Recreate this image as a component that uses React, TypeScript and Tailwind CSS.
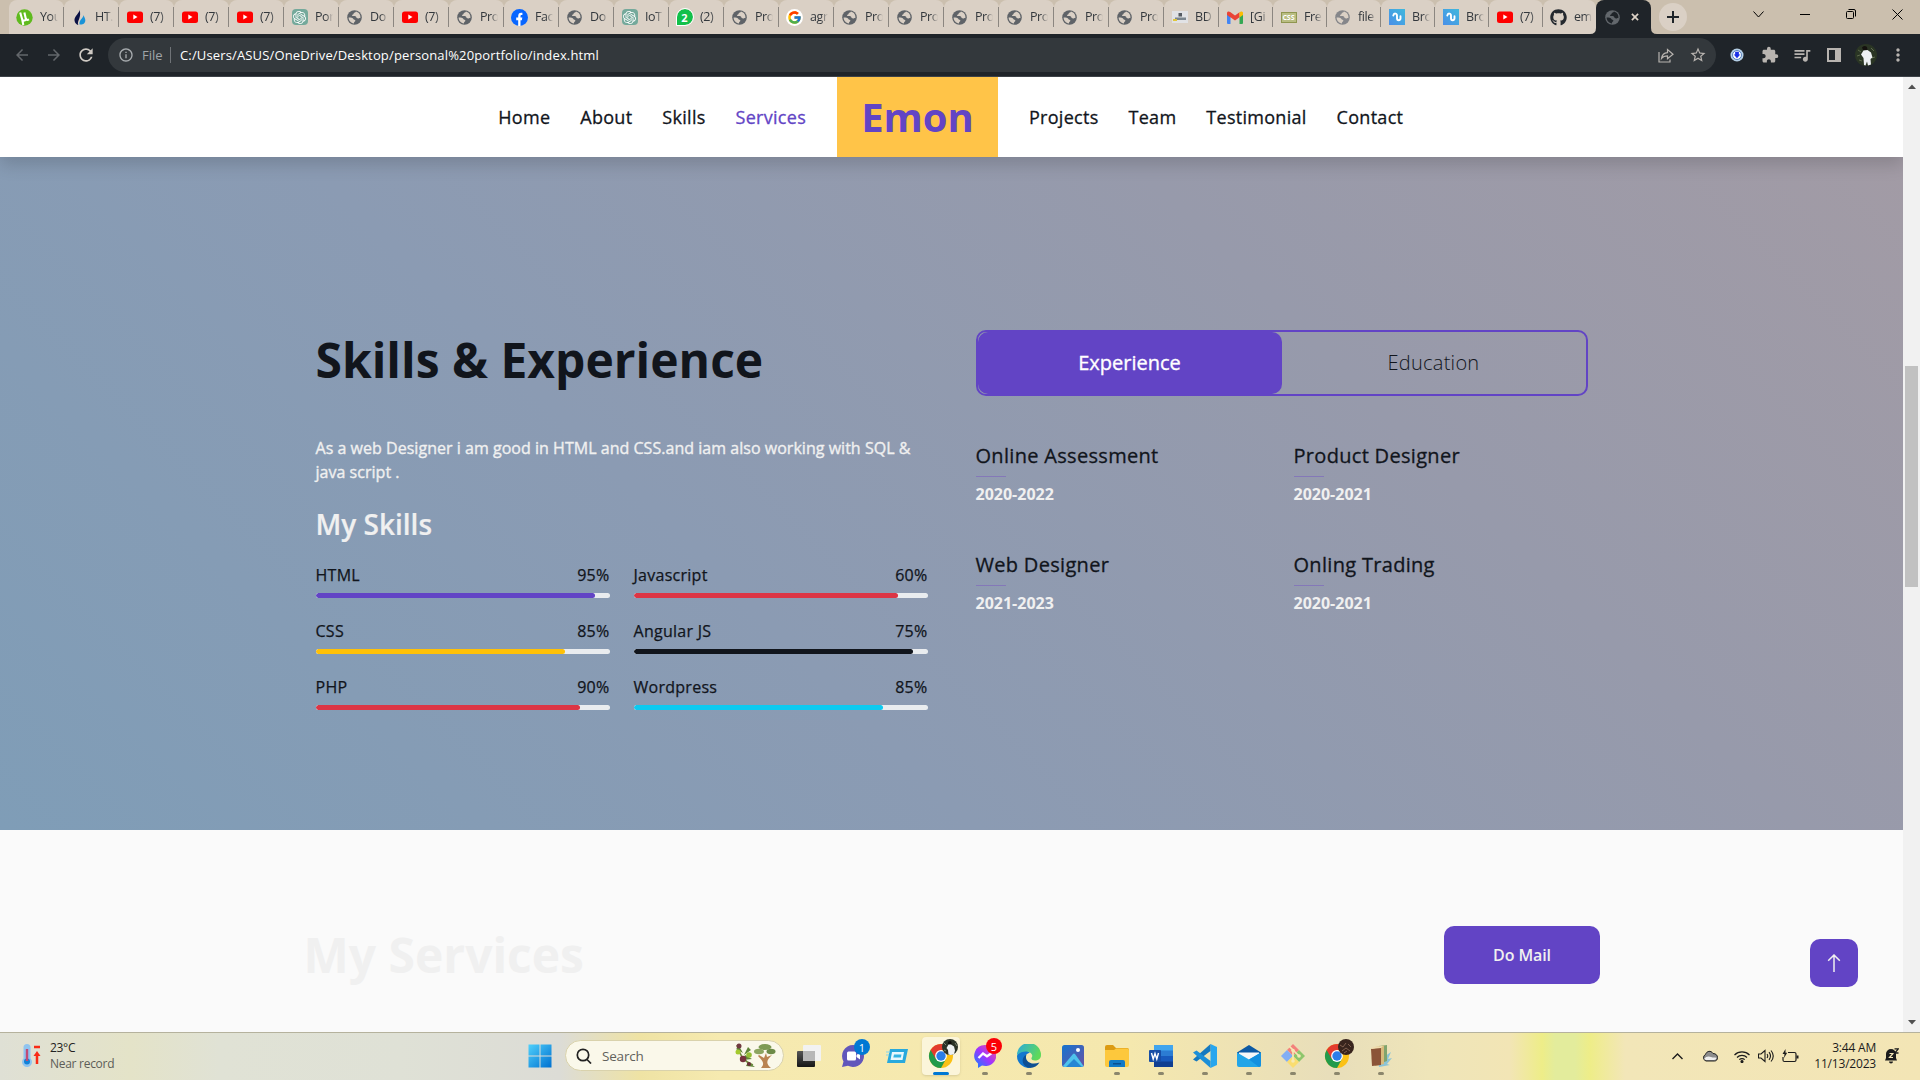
import React from "react";
import { MdExtension, MdQueueMusic, MdInfoOutline, MdStarOutline, MdArrowBack, MdArrowForward, MdRefresh, MdMoreVert } from "react-icons/md";
import { FaGithub } from "react-icons/fa";
import { FcGoogle } from "react-icons/fc";
import { SiOpenai } from "react-icons/si";

const Youtube = () => (
  <svg width="16" height="16" viewBox="0 0 16 16">
    <rect x="0" y="2.500" width="16" height="11.500" rx="2.500" fill="#f00" />
    <path d="M6.300 5.500v5L10.500 8z" fill="#fff" />
  </svg>
);
const GlobeShape = ({ color, cut }: { color: string; cut: string }) => (
  <svg width="15" height="15" viewBox="0 0 15 15">
    <circle cx="7.500" cy="7.500" r="7.300" fill={color} />
    <path d="M9 1.600c-.6 1.200-2 1-2.400 2 .2 1.200-1.800.9-1.500 2.300 1.200.3 3.400-.5 4 .8.300 1.500 1.700 2 3 1.500.7-.3 1-.2 1.300 0C13.800 5 12 2.400 9 1.600z" fill={cut} />
    <path d="M1.600 7.500c1.500-.1 4.300.3 4.800 1.600.2 1 1.900.6 2 1.700-.1 1.100-1.400.8-1.500 2.600C4 13.200 1.700 10.800 1.600 7.500z" fill={cut} />
  </svg>
);
const Globe = () => <GlobeShape color="#5f6368" cut="#dad0c5" />;
const GlobeLight = () => <GlobeShape color="#85868a" cut="#dad0c5" />;
const OpenAi = () => (
  <span className="flex h-4 w-4 items-center justify-center rounded-sm bg-[#74a99b]">
    <SiOpenai size={13} color="#fff" />
  </span>
);
const Wave = () => (
  <svg width="16" height="16" viewBox="0 0 16 16">
    <defs><linearGradient id="wv" x1="0" y1="1" x2="1" y2="0"><stop offset="0" stopColor="#4a8fe8" /><stop offset="1" stopColor="#3fb8dc" /></linearGradient></defs>
    <rect width="16" height="16" fill="url(#wv)" />
    <path d="M4.300 6.500c.6-2.800 3.700-2.400 3.700.3v2.500c0 2.600 3.200 2.600 3.500 0V7.300" fill="none" stroke="#fff" strokeWidth="1.900" strokeLinecap="round" />
  </svg>
);
const Torrent = () => (
  <svg width="17" height="17" viewBox="0 0 17 17">
    <circle cx="8.500" cy="8.500" r="8.200" fill="#5fba1e" />
    <path d="M4.200 3.500l2 7c.6 1.800 4 1.300 3.600-.8L8.400 3.600M9.800 9.500c.5 1.800 2 1.500 3.200.8M6 9.500l1.300 6.500" fill="none" stroke="#fff" strokeWidth="2.100" />
  </svg>
);
const Flame = () => (
  <svg width="14" height="17" viewBox="0 0 14 17">
    <path d="M6.500.5C7 4 1 7 1.500 11.500c.3 2.500 2 4 3.800 4.500C3.500 12 9 9 6.500.5z" fill="#0b1145" />
    <path d="M10.500 6c.2 3-4.500 4.500-4 9.500 3 .6 6-1 5.800-4.500C12.200 9 11 8 10.500 6z" fill="#1a93d8" />
  </svg>
);
const Facebook = () => (
  <svg width="17" height="17" viewBox="0 0 17 17">
    <circle cx="8.500" cy="8.500" r="8.500" fill="#0866ff" />
    <path d="M7.200 17v-5.800H5.200V8.600h2V7.100c0-2.700 1.300-3.700 4.200-3.300v2.200c-1.500-.1-1.900.1-1.900 1.200v1.400h1.800l-.4 2.600H9.500V17z" fill="#fff" />
  </svg>
);
const Whatsapp = () => (
  <span className="flex h-4 w-4 items-center justify-center rounded-full rounded-bl-none bg-[#12c04a] text-[11px] font-bold leading-none text-white outline outline-1 outline-white">2</span>
);
const Picture = () => (
  <svg width="16" height="12" viewBox="0 0 16 12">
    <rect width="16" height="12" fill="#e1e2e5" />
    <rect x="6.500" y="2" width="3.500" height="3.500" fill="#555b62" />
    <rect x="3" y="6.500" width="11" height="2.500" fill="#7b858e" />
    <rect x="1" y="8" width="4" height="2" fill="#e0c63a" />
  </svg>
);
const Gmail = () => (
  <svg width="16" height="13" viewBox="0 0 16 13">
    <path d="M0 2v10q0 1 1 1h2.500V5z" fill="#4285f4" />
    <path d="M16 2v10q0 1-1 1h-2.500V5z" fill="#34a853" />
    <path d="M0 4V2C0 .2 2 0 3.200 1L8 4.600 12.500 1.300v5L8 9.600 3.500 6.200V6.600z" fill="#ea4335" />
    <path d="M12.500 1.200C14 0 16 .3 16 2v2l-3.500 2.600z" fill="#fbbc04" />
  </svg>
);
const Css = () => (
  <span className="flex h-[11px] w-4 items-center justify-center border border-[#8f9650] bg-[#b9bd83] text-[7px] font-bold leading-none text-white">CSS</span>
);
const GoogleG = () => (
  <span className="flex h-[17px] w-[17px] items-center justify-center rounded-full bg-white"><FcGoogle size={15} /></span>
);
const Hub = () => <FaGithub size={17} color="#24292f" />;

const tabs: [React.FC, string][] = [
  [Torrent, "You"], [Flame, "HT."], [Youtube, "(7)"], [Youtube, "(7)"], [Youtube, "(7)"], [OpenAi, "Por"],
  [Globe, "Do"], [Youtube, "(7)"], [Globe, "Pro"], [Facebook, "Fac"], [Globe, "Do"], [OpenAi, "IoT"],
  [Whatsapp, "(2)"], [Globe, "Pro"], [GoogleG, "agr"], [Globe, "Pro"], [Globe, "Pro"], [Globe, "Pro"],
  [Globe, "Pro"], [Globe, "Pro"], [Globe, "Pro"], [Picture, "BD"], [Gmail, "[Gi"], [Css, "Fre"],
  [GlobeLight, "file"], [Wave, "Bro"], [Wave, "Bro"], [Youtube, "(7)"], [Hub, "em"],
];

const Portrait = ({ size }: { size: number }) => (
  <svg width={size} height={size} viewBox="0 0 22 22">
    <circle cx="11" cy="11" r="11" fill="#2a3524" />
    <path d="M3 6l3 2M2 12l3-1M16 4l3 3M17 14l3-1M4 16l3 1" stroke="#5d6a4d" />
    <path d="M7 3.500q2.500-2.500 5-.5l.5 3H8z" fill="#14110e" />
    <path d="M9 21l-.5-7L6 10.500 8.500 6.500l4-.5 3.500 2.500 1.500 5-2 1.500.5 5.500-3 1-1-4-1.500 4z" fill="#edf0f3" />
  </svg>
);

function TabStrip() {
  return (
    <div className="flex h-[34px] bg-[#cbbfae] pl-[9px] text-[12.500px] text-[#33383d]">
      {tabs.map(([Icon, label], i) => (
        <div
          key={i}
          className={`relative flex h-[34px] shrink-0 items-center rounded-t-lg bg-[#dad0c5] ${i < 22 ? "w-[55px]" : i < 28 ? "w-[54px]" : "w-[53px]"}`}
        >
          <span className="ml-[7px] flex w-[17px] shrink-0 items-center justify-center"><Icon /></span>
          <span className="ml-[7px] w-[18px] whitespace-nowrap tracking-[-0.400px] [mask-image:linear-gradient(90deg,#000_60%,transparent)]">{label}</span>
          {i < tabs.length - 1 && <span className="absolute right-0 top-[7px] h-5 w-px bg-[#8b8680]" />}
        </div>
      ))}
      <div className="relative z-10 flex h-[34px] w-[55px] shrink-0 items-center rounded-t-lg bg-[#1f2429]">
        <svg className="absolute -left-1.5 bottom-0" width="6" height="6" viewBox="0 0 6 6"><path d="M6 0v6H0q6 0 6-6z" fill="#1f2429" /></svg>
        <svg className="absolute -right-1.5 bottom-0" width="6" height="6" viewBox="0 0 6 6"><path d="M0 0v6h6Q0 6 0 0z" fill="#1f2429" /></svg>
        <span className="ml-[9px]"><GlobeShape color="#62676c" cut="#1f2429" /></span>
        <svg className="ml-[11px]" width="8" height="8" viewBox="0 0 9 9" stroke="#ddd2c6" strokeWidth="1.900"><path d="M1 1l7 7M8 1L1 8" /></svg>
      </div>
      <div className="ml-2 mt-[3px] flex h-7 w-7 items-center justify-center rounded-full bg-[#dad0c5]">
        <svg width="12" height="12" viewBox="0 0 12 12" stroke="#1f2429" strokeWidth="2"><path d="M6 0v12M0 6h12" /></svg>
      </div>
      <div className="ml-auto flex h-7 items-center text-black">
        <svg className="mr-[36px]" width="11" height="9" viewBox="0 0 11 9" fill="none" stroke="currentColor"><path d="M.5 1.500l5 5.500 5-5.500" /></svg>
        <svg className="mr-[36px]" width="10" height="10" viewBox="0 0 10 10" stroke="currentColor"><path d="M0 5.500h10" /></svg>
        <svg className="mr-[36px]" width="10" height="10" viewBox="0 0 10 10" fill="none" stroke="currentColor"><rect x=".5" y="2.500" width="7" height="7" rx="1" /><path d="M2.500.5H8q1.500 0 1.500 1.500v5.500" /></svg>
        <svg className="mr-[17px]" width="11" height="11" viewBox="0 0 11 11" stroke="currentColor"><path d="M.5.5l10 10M10.500.5l-10 10" /></svg>
      </div>
    </div>
  );
}

function Toolbar() {
  return (
    <div className="flex h-[43px] items-center border-b border-[#3d4248] bg-[#1f2429] text-[#b8b4b0]">
      <MdArrowBack className="ml-[13px]" size={18} color="#63676b" />
      <MdArrowForward className="ml-[14px]" size={18} color="#63676b" />
      <MdRefresh className="ml-[13px]" size={20} color="#cfcac4" />
      <div className="ml-[12px] flex h-[34px] w-[1608px] items-center rounded-full bg-[#33383c]">
        <MdInfoOutline className="ml-[10px]" size={16} color="#a8acaf" />
        <span className="ml-[8px] w-[21px] pt-px text-[13px] text-[#a0a5a9]">File</span>
        <span className="ml-[7px] h-4 w-px bg-[#6f7377]" />
        <span className="ml-[9px] whitespace-nowrap pt-px text-[13px] tracking-[0.150px] text-white">C:/Users/ASUS/OneDrive/Desktop/personal%20portfolio/index.html</span>
        <svg className="ml-auto mr-[15px]" width="16" height="16" viewBox="0 0 16 16" fill="none" stroke="currentColor" strokeWidth="1.200">
          <path d="M1 5v10h11v-2.500M3.500 11.500C4 7.500 6 5.800 9.500 5.600V2.500L15 7.300l-5.500 4.500V8.900C6.500 8.900 5 9.600 3.500 11.500z" />
        </svg>
        <MdStarOutline className="mr-[9px]" size={18} />
      </div>
      <svg className="ml-[14px]" width="14" height="14" viewBox="0 0 15 15">
        <circle cx="7.500" cy="7.500" r="7" fill="#b5cfe6" />
        <circle cx="7.500" cy="7.500" r="4.800" fill="#fff" stroke="#4d78b8" />
        <path d="M5.500 4h4v3H11l-3.500 4L4 7h1.500z" fill="#1b30e8" />
      </svg>
      <MdExtension className="ml-[17px]" size={18} />
      <MdQueueMusic className="ml-[13px]" size={20} />
      <svg className="ml-[15px]" width="14" height="14" viewBox="0 0 14 14"><path d="M0 0h14v14H0zM2 2v10h6V2z" fill="currentColor" fillRule="evenodd" /></svg>
      <span className="ml-[14px]"><Portrait size={22} /></span>
      <MdMoreVert className="ml-[11px]" size={20} />
    </div>
  );
}

function Navbar() {
  return (
    <nav className="relative z-10 flex h-20 shrink-0 items-center bg-white text-[18px] tracking-[0.280px] text-[#11151c] shadow-[0_8px_16px_rgba(0,0,0,0.15)] [-webkit-text-stroke:0.300px]">
      <div className="flex w-[837px] justify-end gap-[30px] pr-[31px]">
        <span>Home</span>
        <span>About</span>
        <span>Skills</span>
        <span className="text-[#6244c5]">Services</span>
      </div>
      <div className="flex h-20 w-[161px] items-center justify-center bg-[#ffc448] text-[40px] font-bold tracking-normal text-[#6244c5] [-webkit-text-stroke:0px]">Emon</div>
      <div className="flex gap-[30px] pl-[31px]">
        <span>Projects</span>
        <span>Team</span>
        <span>Testimonial</span>
        <span>Contact</span>
      </div>
    </nav>
  );
}

const skills = [
  { name: "HTML", label: "95%", width: 95, color: "bg-[#6244c5]" },
  { name: "Javascript", label: "60%", width: 90, color: "bg-[#dc3545]" },
  { name: "CSS", label: "85%", width: 85, color: "bg-[#ffc107]" },
  { name: "Angular JS", label: "75%", width: 95, color: "bg-[#11151c]" },
  { name: "PHP", label: "90%", width: 90, color: "bg-[#dc3545]" },
  { name: "Wordpress", label: "85%", width: 85, color: "bg-[#0dcaf0]" },
];
const jobs = [
  ["Online Assessment", "2020-2022"],
  ["Product Designer", "2020-2021"],
  ["Web Designer", "2021-2023"],
  ["Onling Trading", "2020-2021"],
];

function SkillsSection() {
  return (
    <section className="flex h-[673px] shrink-0 gap-12 bg-[linear-gradient(45deg,#7f9db7_0%,#8b9bb3_38%,#979aab_70%,#a29ba5_100%)] pl-[315.500px] text-[#11151c]">
      <div className="w-[612px] pt-[174px]">
        <h1 className="text-[48px] font-bold leading-[58px]">Skills &amp; Experience</h1>
        <p className="mt-[47px] text-[16px] leading-6 tracking-[0.030px] text-[#f0f0f0] [-webkit-text-stroke:0.350px]">
          As a web Designer i am good in HTML and CSS.and iam also working with SQL &amp;<br />java script .
        </p>
        <h3 className="mt-[23px] text-[28px] font-semibold leading-[34px] text-[#f0f0f0] [-webkit-text-stroke:0.200px]">My Skills</h3>
        <div className="mt-[25px] grid grid-cols-2 gap-x-6">
          {skills.map((s) => (
            <div key={s.name} className="h-14">
              <div className="flex justify-between text-[16px] leading-[19px] tracking-[0.270px] [-webkit-text-stroke:0.250px]">
                <span>{s.name}</span>
                <span>{s.label}</span>
              </div>
              <div className="mt-[8px] h-[5px] overflow-hidden rounded-full bg-[#e9ecef]">
                <div className={`h-full rounded-full ${s.color}`} style={{ width: `${s.width}%` }} />
              </div>
            </div>
          ))}
        </div>
      </div>
      <div className="w-[612px] pt-[173px]">
        <div className="flex h-[66px] rounded-[10px] border-2 border-[#6244c5] text-[20px]">
          <div className="flex w-1/2 items-center justify-center rounded-[10px] bg-[#6244c5] text-white [-webkit-text-stroke:0.350px]">Experience</div>
          <div className="flex w-1/2 items-center justify-center font-light tracking-[0.250px]">Education</div>
        </div>
        <div className="mt-[48px] grid grid-cols-2 gap-x-6">
          {jobs.map(([title, years]) => (
            <div key={title} className="h-[109px]">
              <h5 className="text-[20px] leading-6 tracking-[0.310px] [-webkit-text-stroke:0.300px]">{title}</h5>
              <div className="mt-[8px] h-px w-[30px] bg-[#8478b8]" />
              <div className="mt-[5px] text-[16px] font-bold leading-6 text-[#f0f0f0]">{years}</div>
            </div>
          ))}
        </div>
      </div>
    </section>
  );
}

function ServicesSection() {
  return (
    <section className="flex flex-1 items-start bg-[#fafafa] pl-[303.500px]">
      <h1 className="mt-[96px] w-[1140.500px] text-[48px] font-bold leading-[58px] text-[#f0f0f0]">My Services</h1>
      <div className="mt-[96px] flex h-[58px] w-[156px] items-center justify-center rounded-[10px] bg-[#6244c5] text-[16px] font-semibold tracking-[-0.100px] text-[#f0f0f0]">Do Mail</div>
      <div className="ml-[210px] mt-[109px] flex h-12 w-12 items-center justify-center rounded-[10px] bg-[#6244c5]">
        <svg width="14" height="18" viewBox="0 0 14 18" fill="none" stroke="#f0f0f0" strokeWidth="1.500"><path d="M7 18V1M1.200 6.800L7 1l5.800 5.800" /></svg>
      </div>
    </section>
  );
}

function Scrollbar() {
  return (
    <div className="flex w-[17px] flex-col items-center bg-[#f1f1f1]">
      <svg className="mt-[7px]" width="8" height="5" viewBox="0 0 8 5"><path d="M0 5l4-4.500L8 5z" fill="#505050" /></svg>
      <div className="mt-[277px] h-[221px] w-[13px] bg-[#c1c1c1]" />
      <svg className="mb-[7px] mt-auto" width="8" height="5" viewBox="0 0 8 5"><path d="M0 0l4 4.500L8 0z" fill="#505050" /></svg>
    </div>
  );
}

const Chrome = ({ children }: { children: React.ReactNode }) => (
  <svg width="30" height="30" viewBox="0 0 30 30">
    <circle cx="13" cy="17" r="12" fill="#fbc116" />
    <path d="M13 17L2.600 11A12 12 0 0 0 13 29l5-9z" fill="#229a4b" />
    <path d="M13 11h10.400A12 12 0 0 0 2.600 11l5.200 9z" fill="#e33b2e" />
    <circle cx="13" cy="17" r="5.900" fill="#fff" />
    <circle cx="13" cy="17" r="4.700" fill="#2a7de9" />
    {children}
  </svg>
);
const ManAvatar = () => (
  <g>
    <circle cx="22" cy="8" r="8" fill="#2b3227" />
    <path d="M16 4l2 2M27 4l2 3M16 11l2 1" stroke="#788070" />
    <path d="M20 3q2-2 3.500 0v2.500H20z" fill="#0f0d0b" />
    <path d="M20.500 15.500L20 11l-1.500-2 2-3.500h2.500l3 2 1 4-1 3.500q-3 1.500-5.500.5z" fill="#edf0f2" />
  </g>
);
const DarkAvatar = () => (
  <g>
    <circle cx="22" cy="8" r="8" fill="#38241d" />
    <path d="M16 6l3 2 3-4M18 12l4-3 4 3M24 5l3 3M20 14l3-2" stroke="#81604f" fill="none" />
  </g>
);
const Badge = ({ n, color }: { n: string; color: string }) => (
  <span className={`absolute -right-[6px] -top-[6px] flex h-4 w-4 items-center justify-center rounded-full text-[11px] leading-none text-white ${color}`}>{n}</span>
);

const appIcons: { icon: React.ReactNode; open?: boolean; active?: boolean }[] = [
  { icon: <svg width="24" height="22" viewBox="0 0 24 22"><defs><linearGradient id="tv" x1="0" y1="0" x2="0" y2="1"><stop offset="0" stopColor="#555" /><stop offset="1" stopColor="#161616" /></linearGradient></defs><rect y="6" width="18" height="16" rx="1" fill="url(#tv)" /><rect x="6" y="0" width="18" height="16" rx="1" fill="#f2f2f2" /><path d="M6 6h12v10H6z" fill="#b7b7b7" /></svg> },
  { icon: <span className="relative"><svg width="22" height="22" viewBox="0 0 22 22"><path d="M11 0a11 11 0 1 1-5 20.800L0 22l1.500-5.500A11 11 0 0 1 11 0z" fill="#6157bb" /><rect x="5" y="6.500" width="9" height="9" rx="1.500" fill="#fff" /><path d="M14.500 10l3.500-2.500v7L14.500 12z" fill="#fff" /></svg><Badge n="1" color="bg-[#0078d4]" /></span> },
  { icon: <svg width="22" height="14" viewBox="0 0 22 14"><path d="M4 0h18l-3 14H1z" fill="#28a9dd" /><path d="M6 3h12l-1.500 8h-12z" fill="#e8f8fd" /><path d="M8 5.500h7.500l-.6 3H7.300z" fill="#35b5e3" /><path d="M0 3h4M0 6h3" stroke="#80d5ef" /></svg> },
  { icon: <span className="-mt-1 ml-1"><Chrome><ManAvatar /></Chrome></span>, active: true },
  { icon: <span className="relative"><svg width="22" height="24" viewBox="0 0 22 24"><defs><linearGradient id="ms" x1="0" y1="1" x2="1" y2="0"><stop offset="0" stopColor="#0a86ff" /><stop offset=".5" stopColor="#a033ff" /><stop offset="1" stopColor="#ff5b80" /></linearGradient></defs><path d="M11 1a11 10.500 0 1 1-3 20.500L4 24v-4.500A10.500 10.500 0 0 1 11 1z" fill="url(#ms)" /><path d="M4.500 14L9 9.500l4 2.800 4.500-3" stroke="#fff" strokeWidth="2.300" fill="none" /></svg><Badge n="5" color="bg-[#fb0007]" /></span>, open: true },
  { icon: <svg width="24" height="24" viewBox="0 0 24 24"><defs><linearGradient id="ed" x1="0" y1="0" x2="1" y2=".4"><stop offset="0" stopColor="#2aa9e0" /><stop offset="1" stopColor="#5fd95a" /></linearGradient></defs><path d="M0 12C1 7 9 4 13 9c-6 0-7 9 0 15A12 12 0 0 1 0 12z" fill="#1277cf" /><path d="M0 11A12 12 0 0 1 24 11c0 4-3 5.500-6 5.500s-4.500-1.500-3-3.500c2-4-7-9-15-2z" fill="url(#ed)" /><path d="M9.500 10.500c-2.500 6 4 11.500 13 8A12 12 0 0 1 13 24C5 23 3 14 9.500 10.500z" fill="#0d4f93" /></svg>, open: true },
  { icon: <svg width="22" height="22" viewBox="0 0 22 22"><defs><linearGradient id="ph" x1="0" y1="0" x2="1" y2="1"><stop offset="0" stopColor="#1675cf" /><stop offset="1" stopColor="#6752a5" /></linearGradient></defs><rect width="22" height="22" rx="2.500" fill="url(#ph)" /><path d="M1 21L11 9q1-1 2 0l8.500 12q-.5 1-2 1h-17q-1 0-1.500-1z" fill="#4ec3ec" /><path d="M4 22l8-8 8 8z" fill="#2586d4" /><circle cx="16" cy="5" r="2" fill="#fff" /></svg> },
  { icon: <svg width="24" height="22" viewBox="0 0 24 22"><path d="M0 2q0-2 2-2h6l3 3h11q2 0 2 2v4H0z" fill="#dc9b12" /><path d="M0 5h9l2-1.500h11q2 0 2 2V20q0 2-2 2H2q-2 0-2-2z" fill="#fdc83c" /><path d="M4 22v-5q0-2 2-2h12q2 0 2 2v5z" fill="#137ac6" /><path d="M8 18h8v1.500H8z" fill="#0a4f91" /></svg>, open: true },
  { icon: <svg width="24" height="22" viewBox="0 0 24 22"><rect x="5" y="0" width="19" height="22" rx="1.500" fill="#185abd" /><path d="M5 0h19v6H5z" fill="#41a5ee" /><path d="M5 5.500h19V11H5z" fill="#2b7cd3" /><path d="M5 16.500h19V22H5z" fill="#103f91" /><rect y="5" width="12" height="12" rx="1" fill="#174ea6" /><path d="M2.500 8l1.700 6L6 8.500 7.800 14 9.500 8" stroke="#fff" strokeWidth="1.400" fill="none" /></svg>, open: true },
  { icon: <svg width="24" height="24" viewBox="0 0 24 24"><path d="M17.500 0L24 3v18l-6.500 3z" fill="#28a6ee" /><path d="M17.500 0v7L3.500 17.500 0 15.500 17.500 0z" fill="#1579bf" /><path d="M17.500 24v-7L3.500 6.500 0 8.500 17.500 24z" fill="#1c8fd8" /></svg>, open: true },
  { icon: <svg width="24" height="22" viewBox="0 0 24 22"><path d="M0 7.500L12 0l12 7.500V11H0z" fill="#0c59a4" /><path d="M2 7.500h20v6L12 18 2 13.500z" fill="#f5f7f9" /><path d="M0 7.500l12 7 12-7V20q0 2-2 2H2q-2 0-2-2z" fill="#22a5e8" /><path d="M12 14.500L24 7.500V20q0 2-2 2z" fill="#1490df" /></svg>, open: true },
  { icon: <svg width="24" height="24" viewBox="0 0 24 24"><path d="M12 0l6 6-6 6-6-6z" fill="#f3827c" /><path d="M6 6l6 6-6 6-6-6z" fill="#82aef5" /><path d="M18 6l6 6-6 6-6-6z" fill="#8dc66c" /><path d="M12 12l6 6-6 6-6-6z" fill="#fadd70" /><path d="M8 2l4 4v11M12 6l6 6" stroke="#f5e9b5" strokeWidth="1.700" fill="none" /><circle cx="12" cy="6.500" r="1.800" fill="#f5e9b5" /><circle cx="12" cy="17" r="1.800" fill="#f5e9b5" /><circle cx="18" cy="12" r="1.800" fill="#f5e9b5" /></svg>, open: true },
  { icon: <span className="-mt-1 ml-1"><Chrome><DarkAvatar /></Chrome></span>, open: true },
  { icon: <svg width="22" height="24" viewBox="0 0 22 24"><path d="M8 17l13-9-3 7 4-1-5 6 3 1-11 2z" fill="#8cc4d6" /><path d="M9 2l8-1v16l-8 3z" fill="#81a46d" /><path d="M5 3l9-1.500V20l-9 2z" fill="#d8ba7c" /><path d="M1 5l10-2v18l-9 1z" fill="#8b5437" /><path d="M1 5l2-2 10-1-2 2z" fill="#f0dcae" /></svg>, open: true },
];

function Taskbar() {
  return (
    <footer className="flex h-12 shrink-0 border-t border-[#b5b29d] bg-[linear-gradient(90deg,#dfe0d5_0px,#e4e3c8_130px,#e0e2d5_220px,#dfe1d6_400px,#dcdcd6_560px,#efe3a4_640px,#f6eab0_720px,#f5e8ae_1130px,#e8deba_1330px,#efe5b9_1430px,#f2e5b5_1510px,#eeed88_1542px,#e3ec9c_1555px,#e3ec9c_1575px,#eeed88_1590px,#f2e6b8_1625px,#f3e5b5_1920px)] text-[12px] leading-4 text-[#222]">
      <div className="flex w-[528px] items-start pl-[21px]">
        <svg className="mt-[10px]" width="20" height="24" viewBox="0 0 20 24">
          <path d="M2.500 4.500a3.500 3.500 0 0 1 7 0v11a5 5 0 1 1-7 0z" fill="#8fc4ef" />
          <circle cx="6" cy="18.500" r="3" fill="#1182d8" /><path d="M6 6v12" stroke="#c04b76" strokeWidth="2.400" />
          <path d="M13 4h6" stroke="#fa2b16" strokeWidth="2.500" /><path d="M16 21v-9" stroke="#fa2b16" strokeWidth="2.500" /><path d="M12.500 13L16 8l3.500 5z" fill="#fa2b16" />
        </svg>
        <div className="mt-[7px] pl-[9px]">
          <div className="tracking-[-0.300px]">23°C</div>
          <div className="tracking-[-0.280px] text-[#5c5d58]">Near record</div>
        </div>
      </div>
      <svg className="mt-[11px]" width="24" height="24" viewBox="0 0 24 24">
        <defs><linearGradient id="win" x1="0" y1="0" x2="1" y2="1"><stop offset="0" stopColor="#4fd0fb" /><stop offset="1" stopColor="#0070d0" /></linearGradient></defs>
        <path d="M.5.500h11v11H.500zM12.500.500h11v11h-11zM.500 12.500h11v11H.500zM12.500 12.500h11v11h-11z" fill="url(#win)" />
      </svg>
      <div className="ml-[13px] mt-[7px] flex h-[31px] w-[219px] items-center rounded-full border border-[#d9d2ac] bg-[#faf8ea]">
        <svg className="ml-[10px]" width="16" height="16" viewBox="0 0 16 16" fill="none" stroke="#222" strokeWidth="1.700"><circle cx="7" cy="7" r="5.700" /><path d="M11 11.500l4 4" /></svg>
        <span className="ml-[10px] text-[13.500px] tracking-[-0.200px] text-[#62625c]">Search</span>
        <svg className="ml-auto mr-[7px]" width="42" height="26" viewBox="0 0 42 26">
          <path d="M3 2c2 10 8 17 16 20" stroke="#6f8b3d" strokeWidth="1.500" fill="none" />
          <path d="M2 6l7 4-4-7zM9 17l9-1-7-4zM12 23l9 1-7-5zM14 4l-4 8 7-5z" fill="#5f8438" />
          <circle cx="5" cy="3" r="2.500" fill="#713a40" /><circle cx="4" cy="9" r="2.500" fill="#a4c92e" /><circle cx="9" cy="16" r="3.200" fill="#75323d" /><circle cx="15" cy="12" r="2.800" fill="#94bd34" /><circle cx="15" cy="21" r="2" fill="#6b303a" />
          <path d="M27 25c4-4 2-7-3-12l1-1 5 3 2-5 1 4 5-2c-5 5-7 8-1 13z" fill="#b98350" />
          <ellipse cx="31" cy="4" rx="6.500" ry="3" fill="#7d9a55" /><ellipse cx="25" cy="8.500" rx="5" ry="2.700" fill="#8ca560" /><ellipse cx="37" cy="8.500" rx="4.500" ry="2.700" fill="#6c8a48" />
        </svg>
      </div>
      <div className="ml-[3px] flex">
        {appIcons.map((a, i) => (
          <div key={i} className="relative flex h-[46px] w-11 items-center justify-center">
            <div className={`flex h-[38px] w-[38px] items-center justify-center rounded ${a.active ? "bg-[#fbf5da] shadow-sm" : ""}`}>{a.icon}</div>
            {a.active && <span className="absolute bottom-[4px] h-[3px] w-4 rounded-full bg-[#0078d4]" />}
            {a.open && <span className="absolute bottom-[4px] h-[3px] w-[6px] rounded-full bg-[#8b866c]" />}
          </div>
        ))}
      </div>
      <div className="ml-auto flex h-[46px] items-center text-[#1c1c1c]">
        <svg className="mr-[19px]" width="11" height="7" viewBox="0 0 11 7" fill="none" stroke="currentColor" strokeWidth="1.400"><path d="M.5 6l5-5 5 5" /></svg>
        <svg className="mr-[16px]" width="16" height="12" viewBox="0 0 16 12"><path d="M4 11a3.500 3.500 0 0 1-.5-6.500C4.500 1 9 0 11 3.500c3 0 4.500 2 4.500 4 0 2-1 3.500-3 3.500z" fill="#8d8d8d" stroke="#222" /><path d="M2 9c2-3 5-3 7-2s4 0 5.500 1q-.5 2-2.500 2H4z" fill="#efefef" /></svg>
        <svg className="mr-[8px]" width="16" height="13" viewBox="0 0 16 13" fill="none" stroke="currentColor" strokeWidth="1.200"><path d="M.5 5a10.500 10.500 0 0 1 15 0M3 7.500a7 7 0 0 1 10 0M5.300 9.700a3.800 3.800 0 0 1 5.400 0" /><circle cx="8" cy="11.500" r="1" fill="currentColor" /></svg>
        <svg className="mr-[7.500px]" width="16" height="14" viewBox="0 0 16 14" fill="none" stroke="currentColor" strokeWidth="1.100"><path d="M.5 5v4H3l4 3.500v-11L3 5zM9 5q1.500 2 0 4M11 3.200q3 3.800 0 7.600M13 1.500q4.500 5.500 0 11" /></svg>
        <svg className="mr-[15.500px]" width="17" height="14" viewBox="0 0 17 14" fill="none" stroke="currentColor" strokeWidth="1.200"><path d="M6 3.500h6.500q1.500 0 1.500 1.500v6q0 1.500-1.500 1.500h-10Q1 12.500 1 11V8" /><path d="M15.500 6.500v3" strokeWidth="2" /><path d="M3.500 0L.5 5h2L2 9l3.200-5.200H3.500z" fill="currentColor" stroke="none" /></svg>
        <div className="w-[62px] text-right">
          <div className="tracking-[-0.200px]">3:44 AM</div>
          <div className="whitespace-nowrap tracking-[-0.200px]">11/13/2023</div>
        </div>
        <svg className="ml-[9px] mr-[21px]" width="14" height="16" viewBox="0 0 14 16"><path d="M6 1a5 5 0 0 0-5 5v4l-1 2.500h12L11 10V6a5 5 0 0 0-5-5zM4 13.500h4a2 2 0 0 1-4 0z" fill="currentColor" /><path d="M4.500 5.500H8l-3.500 4H8" stroke="#f3e5b5" fill="none" strokeWidth="1.200" /><path d="M9.500.8h3.800L9.800 5h3.700" stroke="currentColor" fill="none" strokeWidth="1.300" /></svg>
      </div>
    </footer>
  );
}

export default function App() {
  return (
    <div className="flex h-[1080px] w-[1920px] flex-col overflow-hidden font-['Open_Sans','Noto_Sans',sans-serif]">
      <TabStrip />
      <Toolbar />
      <main className="flex min-h-0 flex-1">
        <div className="flex w-[1903px] flex-col overflow-hidden">
          <Navbar />
          <SkillsSection />
          <ServicesSection />
        </div>
        <Scrollbar />
      </main>
      <Taskbar />
    </div>
  );
}
